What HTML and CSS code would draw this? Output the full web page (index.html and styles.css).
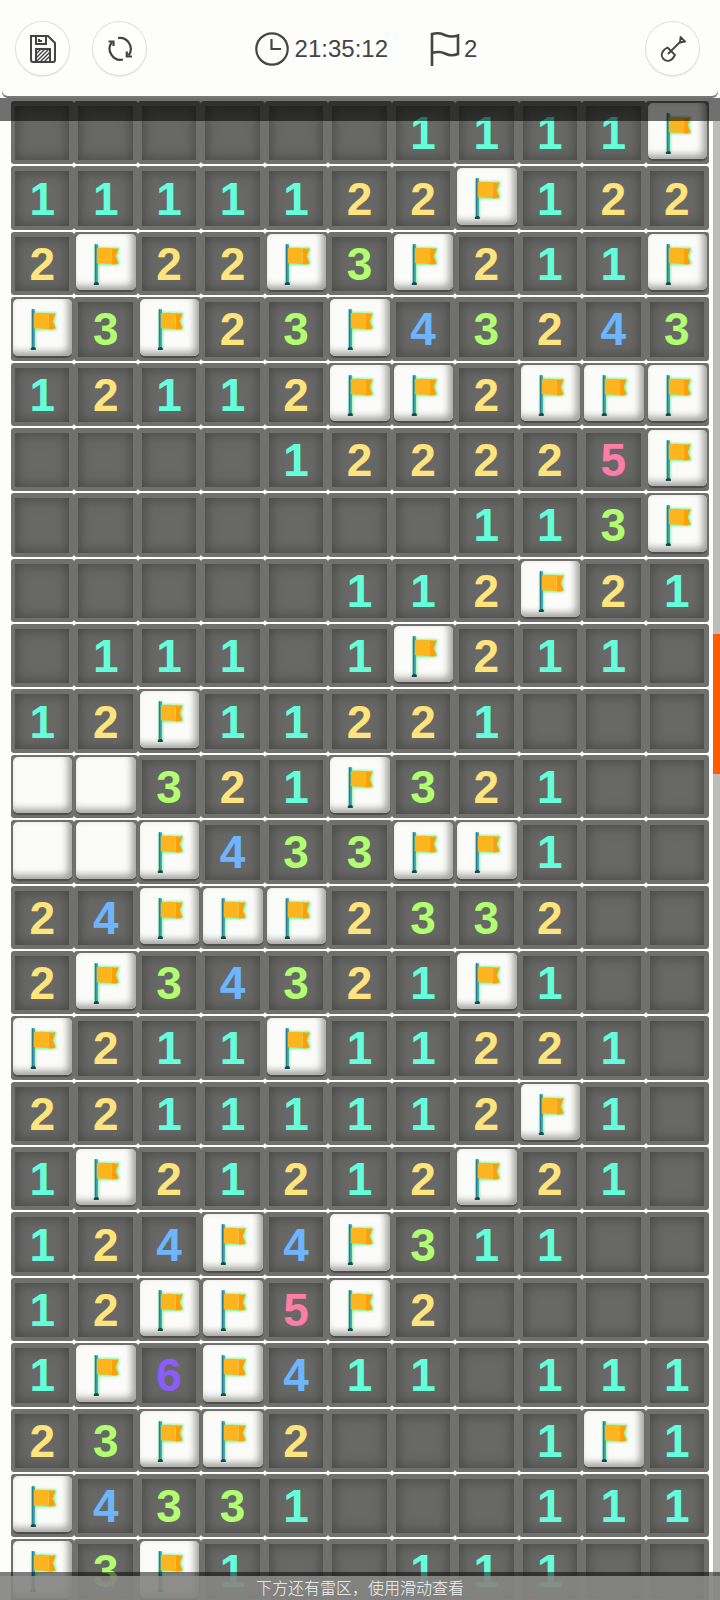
FILE: index.html
```html
<!DOCTYPE html>
<html lang="zh-CN">
<head>
<meta charset="utf-8">
<meta name="viewport" content="width=device-width, initial-scale=1">
<title>扫雷</title>
<link rel="stylesheet" href="styles.css">
</head>
<body>
<svg class="sprites" aria-hidden="true">
  <symbol id="flag" viewBox="0 0 60 56">
    <g class="flag-glow">
      <path d="M21 11V50M22 15L42 15L40 22L42 29L22 29Z" fill="none" stroke="#63f07c" stroke-width="4" stroke-linejoin="round" opacity=".75"/>
    </g>
    <path d="M19 10h3v39h-3z" fill="#3b9ba8"/>
    <path d="M19 10h1v38h-1z" fill="#287599"/>
    <path d="M18 49q3-2 5 0v2h-5z" fill="#164a4c"/>
    <path d="M21 14Q29 13 36 14V30Q28 29 21 29Z" fill="#fdb51f"/>
    <path d="M36 14Q40 15 43 14L40 22L43 29Q39 31 36 30Z" fill="#ff9f08"/>
  </symbol>
</svg>
<header class="toolbar">
  <div class="actions">
    <button class="round" type="button" aria-label="保存">
      <svg width="28" height="30" viewBox="0 0 28 30" fill="none" stroke="#444" stroke-width="2">
        <path d="M2 2H19L26 9V26Q26 28 24 28H4Q2 28 2 26Z"/>
        <path d="M7 2V10H17V2M10 5V7H13"/>
        <path d="M7 28V15H21V28"/>
        <path d="M7 20L12 15M7 24L16 15M7 28L20 15M11 28L21 18M15 28L21 22" stroke-width="1.4"/>
      </svg>
    </button>
    <button class="round" type="button" aria-label="重新开始">
      <svg width="26" height="26" viewBox="0 0 26 26" fill="none" stroke="#444" stroke-width="2.2">
        <path d="M11 2A11 11 0 0 1 21.500 19.500"/>
        <path d="M16 23.500A11 11 0 0 1 5 6"/>
        <path d="M1.500 5.500H6.500V10M25 20.500H19.800V15.500"/>
      </svg>
    </button>
  </div>
  <div class="stats">
    <div class="stat">
      <svg width="34" height="34" viewBox="0 0 34 34" fill="none" stroke="#444" stroke-width="2.2">
        <circle cx="17" cy="17" r="15.700"/><path d="M16.500 7V17H26"/>
      </svg>
      <span class="value">21:35:12</span>
    </div>
    <div class="stat">
      <svg width="30" height="34" viewBox="0 0 30 34" fill="none" stroke="#444" stroke-width="2.600">
        <path d="M2 34V2C10 0 12 2 16 3.500C20 5 24 4.800 28 3.500V22C23 24 19 23.500 15 21.500C11 19.500 7 19.500 2 21"/>
      </svg>
      <span class="value">2</span>
    </div>
  </div>
  <button class="round dig" type="button" aria-label="挖掘">
    <svg width="26" height="26" viewBox="0 0 26 26" fill="none" stroke="#444" stroke-width="1.800" stroke-linejoin="round">
      <path d="M8 18L21 5"/>
      <path d="M20.500 1L25 5.500L20 6.500Z"/>
      <path d="M7.500 11.500L15 19C12 25 7 26.500 3.500 23C0 19.500 2 14 7.500 11.500Z"/>
    </svg>
  </button>
</header>
<main class="field">
  <div class="board" id="board"></div>
  <div class="top-shade"></div>
  <div class="track"><div class="thumb"></div></div>
  <p class="hint">下方还有雷区，使用滑动查看</p>
</main>
<script src="board.js"></script>
</body>
</html>
```
FILE: styles.css
```css
* { box-sizing: border-box; }
body {
  margin: 0;
  height: 100vh;
  overflow: hidden;
  display: flex;
  flex-direction: column;
  background: #fdfdfc;
  color: #444;
  font-family: "Liberation Sans", Arial, "Noto Sans CJK SC", sans-serif;
}
button { font: inherit; color: inherit; padding: 0; border: 0; }
.sprites { position: absolute; width: 0; height: 0; }
.toolbar {
  position: relative;
  z-index: 2;
  display: grid;
  grid-template-columns: 1fr auto 1fr;
  align-items: center;
  margin: 0 2px 2px;
  padding: 22px 19px 21px 14px;
  background: #fdfdfc;
  border-radius: 0 0 6px 6px;
  box-shadow: 0 2px 0 #777775;
}
.actions { display: flex; gap: 24px; }
.round {
  width: 53px;
  height: 53px;
  display: flex;
  align-items: center;
  justify-content: center;
  border-radius: 50%;
  background: #fefefd;
  box-shadow: 0 0 0 1px #e2e2e1, 0 1px 2px #c4c4c2;
}
.dig { justify-self: end; }
.stats { display: flex; gap: 42px; margin-left: 17px; }
.stat { display: flex; align-items: center; gap: 6px; }
.stat + .stat { gap: 4px; }
.value { font-size: 24px; line-height: 34px; }
.field {
  position: relative;
  flex: 1;
  min-height: 0;
  overflow: hidden;
  padding: 3px 11px 0;
}
.board { display: grid; grid-template-columns: repeat(11, 1fr); }
.cell {
  position: relative;
  display: flex;
  min-width: 0;
  min-height: 0;
  aspect-ratio: 33 / 34;
  padding: 0 0 2px;
  background: none;
}
.frame {
  flex: 1;
  display: flex;
  align-self: stretch;
  min-width: 0;
  padding: 5px 5px 4px 4px;
  background: #70706e;
  border-radius: 3px;
}
.well {
  flex: 1;
  display: flex;
  align-items: center;
  justify-content: center;
  background: #686866;
  box-shadow: inset 0 0 13px 1px #464644;
  font-size: 46px;
  line-height: 46px;
  font-weight: 700;
}
.covered .frame { padding: 2px 2px 5px; }
.tile {
  flex: 1;
  display: flex;
  border-radius: 5px;
  background: #fbfbf9;
  box-shadow: inset -4px -4px 7px #a0a09d, 0 2px 1px #4c4c4a;
}
.tile svg { width: 100%; height: 100%; }
.flag-glow { filter: blur(1px); }
.n1 { color: #64ffda; }
.n2 { color: #ffe37d; }
.n3 { color: #b1ff70; }
.n4 { color: #6db5ff; }
.n5 { color: #ff7da6; }
.n6 { color: #8c5cff; }
.top-shade {
  position: absolute;
  inset: 0 0 auto;
  height: 23px;
  background: rgba(0, 0, 0, .56);
}
.track {
  position: absolute;
  top: 23px;
  right: 0;
  bottom: 0;
  width: 7px;
  background: #bcbcba;
}
.thumb {
  position: absolute;
  top: 513px;
  width: 100%;
  height: 140px;
  background: #ff5c00;
}
.hint {
  position: absolute;
  inset: auto 0 0;
  margin: 0;
  height: 28px;
  border-top: 4px solid rgba(0, 0, 0, .5);
  background: rgba(132, 132, 130, .92);
  background-clip: padding-box;
  color: #f4f4f2;
  font-size: 16px;
  line-height: 22px;
  font-weight: 300;
  font-family: "Noto Sans CJK SC", sans-serif;
  text-align: center;
}
```
FILE: board.js
```js
// F = flag, # = covered, . = open and empty, digit = neighbouring mines
const rows = [
  "......1111F",
  "1111122F122",
  "2F22F3F211F",
  "F3F23F43243",
  "12112FF2FFF",
  "....122225F",
  ".......113F",
  ".....112F21",
  ".111.1F211.",
  "12F11221...",
  "##321F321..",
  "##F433FF1..",
  "24FFF2332..",
  "2F34321F1..",
  "F211F11221.",
  "22111112F1.",
  "1F21212F21.",
  "124F4F311..",
  "12FF5F2....",
  "1F6F411.111",
  "23FF2...1F1",
  "F4331...111",
  "F3F1..111.."
];

const board = document.getElementById("board");
board.innerHTML = rows.join("").split("").map(c => {
  if (c === "F" || c === "#") {
    const flag = c === "F" ? '<svg><use href="#flag"/></svg>' : "";
    const label = c === "F" ? "旗" : "未翻开";
    return `<button type="button" class="cell covered" aria-label="${label}"><span class="frame"><span class="tile">${flag}</span></span></button>`;
  }
  const digit = c === "." ? "" : c;
  return `<button type="button" class="cell" aria-label="${digit || "空"}"><span class="frame"><span class="well n${digit || 0}">${digit}</span></span></button>`;
}).join("");
```
